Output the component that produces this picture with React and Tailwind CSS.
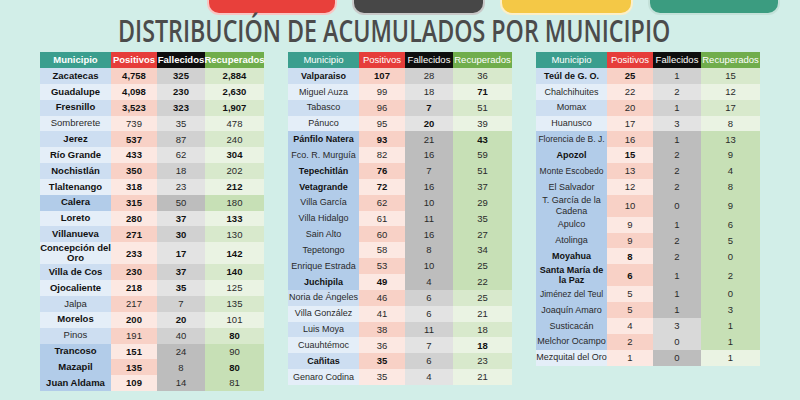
const T1 = [
  ["Zacatecas", "4,758", "325", "2,884", "1111", 0],
  ["Guadalupe", "4,098", "230", "2,630", "1111", 0],
  ["Fresnillo", "3,523", "323", "1,907", "1111", 0],
  ["Sombrerete", "739", "35", "478", "0000", 0],
  ["Jerez", "537", "87", "240", "1100", 0],
  ["Río Grande", "433", "62", "304", "1101", 0],
  ["Nochistlán", "350", "18", "202", "1100", 0],
  ["Tlaltenango", "318", "23", "212", "1101", 0],
  ["Calera", "315", "50", "180", "1100", 1],
  ["Loreto", "280", "37", "133", "1111", 0],
  ["Villanueva", "271", "30", "130", "1110", 0],
  ["Concepción del\nOro", "233", "17", "142", "1111", 0],
  ["Villa de Cos", "230", "37", "140", "1111", 0],
  ["Ojocaliente", "218", "35", "125", "1110", 0],
  ["Jalpa", "217", "7", "135", "0000", 0],
  ["Morelos", "200", "20", "101", "1110", 0],
  ["Pinos", "191", "40", "80", "0001", 0],
  ["Trancoso", "151", "24", "90", "1100", 1],
  ["Mazapil", "135", "8", "80", "1101", 1],
  ["Juan Aldama", "109", "14", "81", "1100", 1],
];

const T2 = [
  ["Valparaiso", "107", "28", "36", "1100", 0],
  ["Miguel Auza", "99", "18", "71", "0001", 0],
  ["Tabasco", "96", "7", "51", "0010", 0],
  ["Pánuco", "95", "20", "39", "0010", 0],
  ["Pánfilo Natera", "93", "21", "43", "1101", 1],
  ["Fco. R. Murguía", "82", "16", "59", "0000", 1],
  ["Tepechitlán", "76", "7", "51", "1100", 1],
  ["Vetagrande", "72", "16", "37", "1100", 1],
  ["Villa García", "62", "10", "29", "0000", 1],
  ["Villa Hidalgo", "61", "11", "35", "0000", 1],
  ["Sain Alto", "60", "16", "27", "0000", 1],
  ["Tepetongo", "58", "8", "34", "0000", 1],
  ["Enrique Estrada", "53", "10", "25", "0000", 1],
  ["Juchipila", "49", "4", "22", "1100", 1],
  ["Noria de Ángeles", "46", "6", "25", "0000", 0],
  ["Villa González", "41", "6", "21", "0000", 0],
  ["Luis Moya", "38", "11", "18", "0000", 0],
  ["Cuauhtémoc", "36", "7", "18", "0001", 0],
  ["Cañitas", "35", "6", "23", "1100", 0],
  ["Genaro Codina", "35", "4", "21", "0000", 0],
];

const T3 = [
  ["Teúl de G. O.", "25", "1", "15", "1100", 0],
  ["Chalchihuites", "22", "2", "12", "0000", 0],
  ["Momax", "20", "1", "17", "0000", 0],
  ["Huanusco", "17", "3", "8", "0000", 0],
  ["Florencia de B. J.", "16", "1", "13", "0000", 1, { sm: true }],
  ["Apozol", "15", "2", "9", "1100", 1],
  ["Monte Escobedo", "13", "2", "4", "0000", 1, { sm: true }],
  ["El Salvador", "12", "2", "8", "0000", 1],
  ["T. García de la\nCadena", "10", "0", "9", "0000", 1],
  ["Apulco", "9", "1", "6", "0000", 1],
  ["Atolinga", "9", "2", "5", "0000", 1],
  ["Moyahua", "8", "2", "0", "1100", 1],
  ["Santa María de\nla Paz", "6", "1", "2", "1100", 1],
  ["Jiménez del Teul", "5", "1", "0", "0000", 1, { sm: true }],
  ["Joaquín Amaro", "5", "1", "3", "0000", 1],
  ["Susticacán", "4", "3", "1", "0000", 1, { fal: "light" }],
  ["Melchor Ocampo", "2", "0", "1", "0000", 1, { fal: "light" }],
  ["Mezquital del Oro", "1", "0", "1", "0000", 0, { fal: "dark" }],
];

function Row({ r, i, small }) {
  const [name, pos, fal, rec, bold, band, extra = {}] = r;
  const dark = i % 2 === 0;
  const h = name.includes("\n") ? "h-[22px]" : "h-[15.85px]";
  const b = (k) => (bold[k] === "1" ? "font-bold text-[#111]" : "text-[#2a2a2a]");

  const muni = band ? "bg-[#b2cce9]" : dark ? "bg-[#cddef1]" : "bg-[#e4eef8]";
  const posBg = dark ? "bg-[#f8d1c6]" : "bg-[#fce8e2]";
  let falBg = band ? "bg-[#bdbdbd]" : dark ? "bg-[#d1d1d1]" : "bg-[#e3e3e3]";
  if (extra.fal === "light") falBg = "bg-[#d9d9d9]";
  if (extra.fal === "dark") falBg = "bg-[#bdbdbd]";
  const recBg = band ? "bg-[#c7e0b6]" : dark ? "bg-[#d8e9cc]" : "bg-[#eaf3e3]";

  const nameSize = extra.sm ? "text-[8.5px]" : small ? "text-[9px]" : "text-[9.5px]";
  const cell = "flex items-center justify-center text-center";
  return (
    <>
      <div className={`${cell} ${h} ${muni} ${b(0)} ${nameSize} whitespace-pre leading-[10.5px]`}>
        {name}
      </div>
      <div className={`${cell} ${h} ${posBg} ${b(1)}`}>{pos}</div>
      <div className={`${cell} ${h} ${falBg} ${b(2)}`}>{fal}</div>
      <div className={`${cell} ${h} ${recBg} ${b(3)}`}>{rec}</div>
    </>
  );
}

function Table({ rows, boldHead, small }) {
  const head = `flex items-center justify-center h-[16px] text-white whitespace-nowrap ${boldHead ? "font-bold" : ""}`;
  return (
    <div className="grid grid-cols-[71px_46px_48px_59px] text-[9.5px] leading-none">
      <div className={`${head} bg-[#3b9e8e]`}>Municipio</div>
      <div className={`${head} bg-[#e63d3a]`}>Positivos</div>
      <div className={`${head} bg-[#0e0e0e]`}>Fallecidos</div>
      <div className={`${head} bg-[#70ad4c]`}>Recuperados</div>
      {rows.map((r, i) => (
        <Row key={r[0]} r={r} i={i} small={small} />
      ))}
    </div>
  );
}

export default function App() {
  return (
    <div
      className="w-[800px] h-[400px] overflow-hidden bg-[#d2eee8]"
      style={{ fontFamily: '"Liberation Sans", Arial, sans-serif' }}
    >
      {/* top buttons, cut off by the frame */}
      <div className="flex gap-[15px] pl-[207px]">
        <div className="w-[130px] h-[15px] rounded-b-[12px] bg-[#e8403b] border-2 border-t-0 border-white/70" />
        <div className="w-[133px] h-[15px] rounded-b-[12px] bg-[#474747] border-2 border-t-0 border-white/70" />
        <div className="w-[133px] h-[15px] rounded-b-[12px] bg-[#f4c846] border-2 border-t-0 border-white/70" />
        <div className="w-[132px] h-[15px] rounded-b-[12px] bg-[#3b9c80] border-2 border-t-0 border-white/70" />
      </div>

      <div className="flex justify-center pr-[12px]">
        <h1
          className="inline-block scale-x-[0.75] whitespace-nowrap text-[31px] leading-[31px] font-semibold text-[#4b4b4b]"
          style={{ fontFamily: '"Open Sans", sans-serif' }}
        >
          DISTRIBUCIÓN DE ACUMULADOS POR MUNICIPIO
        </h1>
      </div>

      <div className="mt-[6px] flex justify-center items-start gap-[24px]">
        <Table rows={T1} boldHead />
        <Table rows={T2} small />
        <Table rows={T3} small />
      </div>
    </div>
  );
}
